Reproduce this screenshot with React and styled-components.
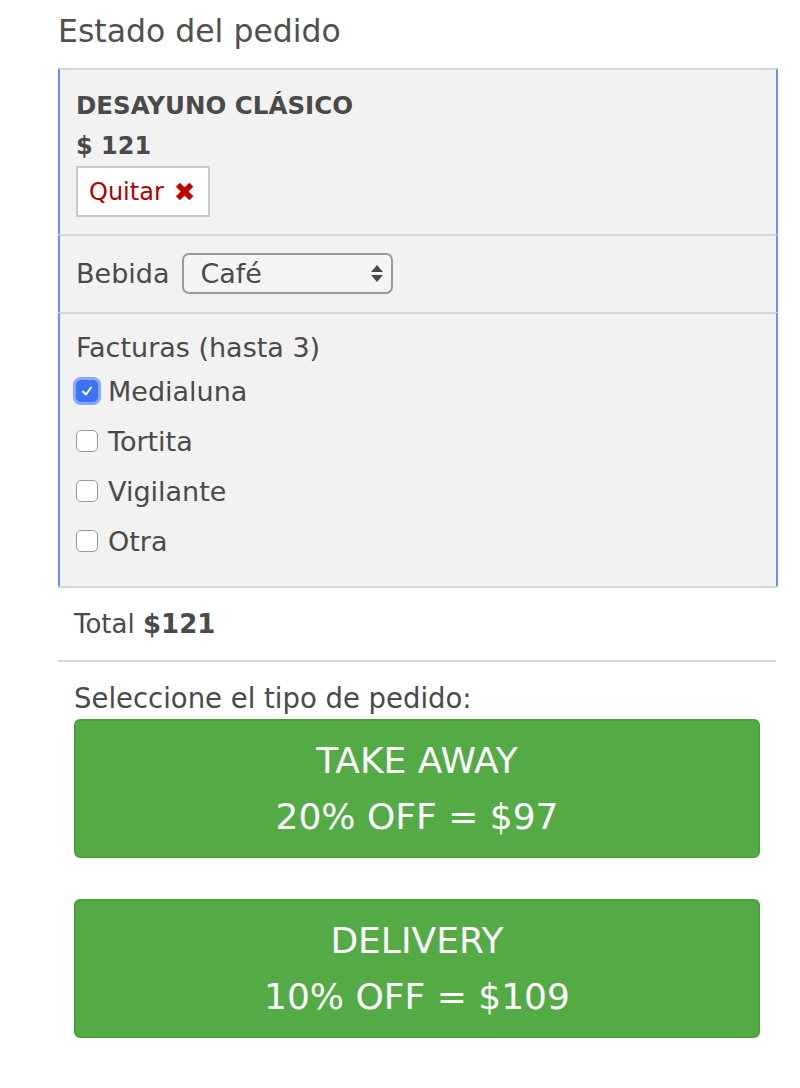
import styled, { createGlobalStyle } from "styled-components";

const GlobalStyle = createGlobalStyle`
  body {
    margin: 0;
    background: #fff;
    font-family: "DejaVu Sans", "Noto Sans", sans-serif;
    color: #4a4a4a;
  }
`;

const Page = styled.div`
  width: 720px;
  padding-left: 58px;
`;

const Title = styled.h2`
  margin: 0;
  height: 68px;
  padding-top: 11px;
  box-sizing: border-box;
  font-size: 31.5px;
  font-weight: normal;
  line-height: 40px;
  color: #505050;
`;

const Card = styled.div`
  border-bottom: 2px solid #d6d6d6;
`;

const Section = styled.div`
  background: #f2f2f2;
  border-top: 2px solid #d6d6d6;
  border-left: 2px solid #6b8eff;
  border-right: 2px solid #6b8eff;
  padding: ${(p) => p.$pad || "16px"};
  font-size: 27px;
`;

const ItemName = styled.div`
  font-weight: bold;
  font-size: 24.5px;
  line-height: 36px;
  margin-top: 2px;
`;

const Price = styled.div`
  font-weight: bold;
  font-size: 24px;
  line-height: 36px;
  margin-top: 4px;
`;

const RemoveButton = styled.button`
  display: flex;
  align-items: center;
  gap: 10px;
  height: 51px;
  margin-top: 2px;
  padding: 0 12px 0 11px;
  background: #fff;
  border: 2px solid #c8c8c8;
  font-family: inherit;
  font-size: 24px;
  color: #b00000;
`;

const Cross = styled.span`
  font-size: 26px;
  color: #c00000;
`;

const Row = styled.div`
  display: flex;
  align-items: center;
  gap: 13px;
`;

const SelectWrap = styled.div`
  position: relative;
  width: 211px;
  height: 41px;
`;

const Select = styled.select`
  appearance: none;
  width: 100%;
  height: 100%;
  padding: 0 16px;
  border: 2px solid #9a9a9a;
  border-radius: 7px;
  background: #f5f5f5;
  font-family: inherit;
  font-size: 27px;
  color: #4a4a4a;
`;

const Arrows = styled.svg`
  position: absolute;
  right: 9px;
  top: 11px;
  pointer-events: none;
`;

const GroupLabel = styled.div`
  line-height: 36px;
`;

const CheckRow = styled.label`
  display: flex;
  align-items: center;
  gap: 10px;
  height: 50px;
`;

const Box = styled.span`
  width: 22px;
  height: 22px;
  box-sizing: border-box;
  border-radius: 5px;
  border: 1px solid ${(p) => (p.$checked ? "#3b73f0" : "#9a9a9a")};
  background: ${(p) => (p.$checked ? "#3b73f0" : "#fff")};
  box-shadow: ${(p) => (p.$checked ? "0 0 0 3px #86a8f8" : "none")};
  display: flex;
  align-items: center;
  justify-content: center;
`;

const TotalRow = styled.div`
  padding: 0 16px;
  height: 72px;
  display: flex;
  align-items: center;
  font-size: 26px;
  border-bottom: 2px solid #d6d6d6;
  margin-right: 2px;
`;

const Prompt = styled.div`
  padding: 0 16px;
  margin-top: 20px;
  font-size: 27.5px;
  line-height: 32px;
`;

const Options = styled.div`
  display: flex;
  flex-direction: column;
  gap: 41px;
  padding: 5px 16px 0;
`;

const OrderButton = styled.button`
  height: 139px;
  width: 686px;
  border: 2px solid #4a9f3d;
  border-radius: 6px;
  background: #54ab46;
  color: #fff;
  font-family: inherit;
  font-size: 36px;
  line-height: 56px;
  padding: 0;
`;

const facturas = [
  { name: "Medialuna", checked: true },
  { name: "Tortita" },
  { name: "Vigilante" },
  { name: "Otra" },
];

export default function App() {
  return (
    <Page>
      <GlobalStyle />
      <Title>Estado del pedido</Title>
      <Card>
        <Section $pad="16px 16px 17px">
          <ItemName>DESAYUNO CLÁSICO</ItemName>
          <Price>$ 121</Price>
          <RemoveButton>
            Quitar <Cross>✖</Cross>
          </RemoveButton>
        </Section>
        <Section $pad="17px 16px 18px">
          <Row>
            Bebida
            <SelectWrap>
              <Select defaultValue="cafe">
                <option value="cafe">Café</option>
                <option value="te">Té</option>
              </Select>
              <Arrows width="14" height="19" viewBox="0 0 14 19">
                <path d="M7 1 L13 8 H1 Z" fill="#4a4a4a" />
                <path d="M1 11 H13 L7 18 Z" fill="#4a4a4a" />
              </Arrows>
            </SelectWrap>
          </Row>
        </Section>
        <Section $pad="16px 16px 20px">
          <GroupLabel>Facturas (hasta 3)</GroupLabel>
          {facturas.map((f) => (
            <CheckRow key={f.name}>
              <Box $checked={f.checked}>
                {f.checked && (
                  <svg width="14" height="14" viewBox="0 0 14 14">
                    <path
                      d="M3 7.5 L6 10.5 L11 3.5"
                      stroke="#fff"
                      strokeWidth="2"
                      fill="none"
                      strokeLinecap="round"
                      strokeLinejoin="round"
                    />
                  </svg>
                )}
              </Box>
              {f.name}
            </CheckRow>
          ))}
        </Section>
      </Card>
      <TotalRow>
        Total&nbsp;<b>$121</b>
      </TotalRow>
      <Prompt>Seleccione el tipo de pedido:</Prompt>
      <Options>
        <OrderButton>
          TAKE AWAY
          <br />
          20% OFF = $97
        </OrderButton>
        <OrderButton>
          DELIVERY
          <br />
          10% OFF = $109
        </OrderButton>
      </Options>
    </Page>
  );
}
